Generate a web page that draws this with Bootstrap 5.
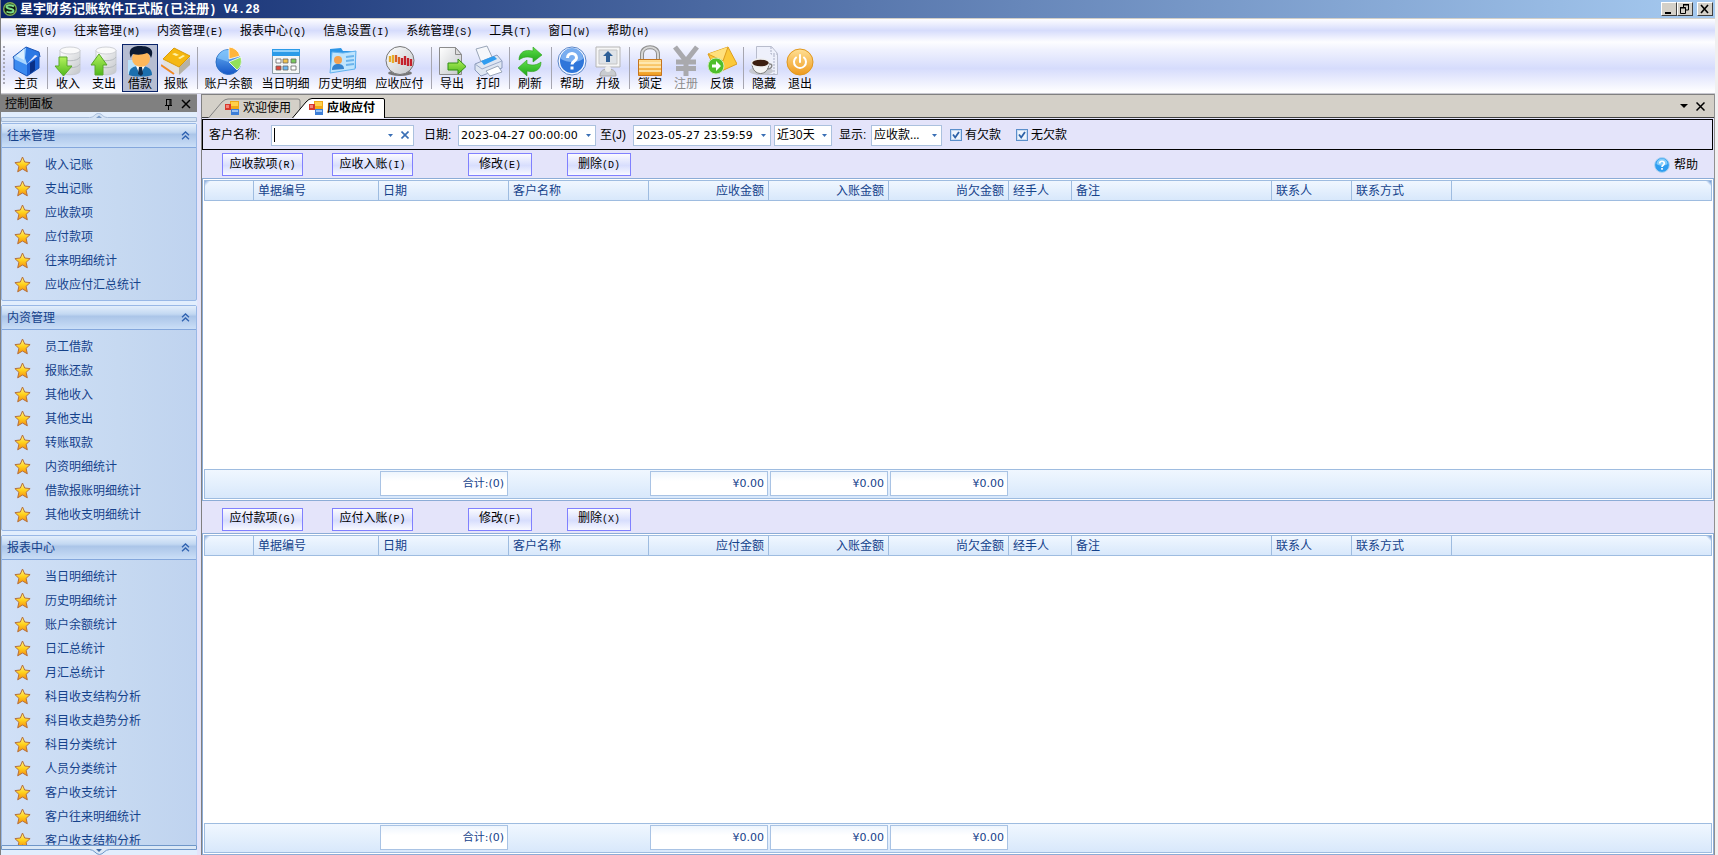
<!DOCTYPE html>
<html lang="zh-CN">
<head>
<meta charset="utf-8">
<meta name="viewport" content="width=device-width, initial-scale=1">
<title>星宇财务记账软件正式版</title>
<link rel="stylesheet" href="https://cdn.jsdelivr.net/npm/bootstrap@5.3.0/dist/css/bootstrap.min.css">
<style>
:root{--navy:#15428b;--line:#9ebce0;--lav:#e4e4fa}
body{font:12px/16px "DejaVu Sans","Noto Sans CJK SC",sans-serif;color:#000;background:#f0f0f0;overflow:hidden}
.cjk,.cjk button,.cjk a{font-family:"Liberation Sans","Noto Sans CJK SC",sans-serif}
.app{height:100vh;margin-right:3px;border-left:1px solid #808080;background:var(--lav)}
.key{font-family:"Liberation Mono",monospace;font-size:10px}
button,input,select{font:inherit;color:inherit}
button{padding:0;border:0;background:none;white-space:nowrap}
a{color:inherit;text-decoration:none;white-space:nowrap}
.defs{width:0;height:0;position:absolute}
/* title bar */
.titlebar{height:19px;flex:none;padding:0 2px;background:linear-gradient(90deg,#0a246a,#a6caf0);border-bottom:1px solid #d4d0c8;color:#fff;font-size:13px;font-weight:700}
.titlebar h1{font:inherit;margin:0 0 0 3px;white-space:pre}
.titlebar h1 span{font:700 12px "Liberation Mono",monospace}
.winbtn{width:16px;height:14px;background:#d4d0c8;border:1px solid;border-color:#fff #404040 #404040 #fff;display:flex}
/* menu and tool strips */
.menus{height:23px;flex:none;padding:2px 0 0 5px;background:linear-gradient(#fdfdff,#d6dcfc 50%,#fdfdff)}
.menus button{padding:0 8px 0 9px}
.tools{height:52px;flex:none;padding:2px 0 1px 2px;background:linear-gradient(#fdfdff,#f0f2fe 15%,#d6dcfc 52%,#fdfdff 96%);border-bottom:1px solid #c8c8d0}
.grip{width:5px;height:40px;margin-top:2px;background:repeating-linear-gradient(#a8a8b4 0 2px,transparent 2px 4px);background-clip:content-box;padding-right:3px}
.tool{width:36px;height:48px;display:flex;flex-direction:column;align-items:center;border:1px solid transparent;flex:none}
.tool.wide{width:57px}
.tool svg{width:30px;height:32px;flex:none}
.tool span{line-height:14px}
.tool.on{background:#b6bdd2;border-color:#0a246a}
.tool:disabled{color:#8d8d8d}
.sep{width:6px;flex:none;display:flex;justify-content:center}
.sep::before{content:"";width:1px;height:42px;margin-top:3px;background:#a6a6b0}
/* left panel */
.side{width:196px;flex:none;margin-right:4px;color:var(--navy)}
.sidehead{height:18px;background:#808080;color:#000;padding:0 5px 0 4px;border-top:1px solid #9a9a9a}
.panelbody{background:#e2eefd;flex:1;min-height:0}
.strip{height:11px;flex:none}
.strip.dn{height:10px}
.strip svg{width:100%;height:100%;display:block}
.groups{flex:1;min-height:0;overflow:hidden}
.grp{border:1px solid #99b8e6;border-radius:2px;margin-bottom:4px;background:linear-gradient(90deg,#d0e0f7,#c6d9f1 60%,#bfd3ef)}
.grp h2{font:inherit;height:24px;margin:0;padding:0 6px 0 5px;border-bottom:1px solid #84a7dc;background:linear-gradient(#e3eefb,#c3d8f2 35%,#abc5e8 45%,#cadef7)}
.grp ul{list-style:none;margin:0;padding:5px 0 3px 12px}
.grp li a{height:24px;display:flex;align-items:center;gap:14px}
.grp li svg{width:17px;height:17px;flex:none;margin-bottom:2px}
/* document area */
.work{flex:1;min-width:0;border-left:1px solid #808080;border-right:1px solid #909090}
.tabs{height:24px;flex:none;background:#d4d0c8;border-top:1px solid #808080;border-bottom:1px solid #404040;padding:0 9px 0 6px}
.doctab{height:20px;width:93px;margin-top:3px;position:relative;display:flex;align-items:center;padding-left:17px;gap:4px}
.doctab + .doctab{margin-left:-9px}
.doctab .edge{position:absolute;inset:0;width:93px;height:20px}
.doctab .ico,.doctab span{position:relative}
.doctab .ico{width:14px;height:14px}
.filter{height:31px;flex:none;border:1px solid #000;margin:1px 1px 0 0;padding:1px 0 0 6px;font-size:12px}
.filter input[type=text]{font-size:11px;font-family:"DejaVu Sans","Noto Sans CJK SC",sans-serif}
.combo{height:21px;border:1px solid #abc1de;background:#fff;display:flex;align-items:center}
.combo input{border:0;outline:0;padding:0 0 0 2px;flex:1;min-width:0;height:18px;background:none}
.combo input:placeholder-shown{background:linear-gradient(#000,#000) 2px center/1px 14px no-repeat}
.combo button{width:14px;height:18px;display:flex;align-items:center;justify-content:center}
.combo button.clr{width:16px}
.pick{height:21px;border:1px solid #abc1de;border-radius:0;padding:0 2px;appearance:none;font-family:"Open Sans","Noto Sans CJK SC",sans-serif;background:#fff url("data:image/svg+xml,%3Csvg xmlns='http://www.w3.org/2000/svg' width='5' height='3'%3E%3Cpath d='M0 0h5L2.5 3z' fill='%233a6fb5'/%3E%3C/svg%3E") no-repeat right 4px center}
.tick{width:12px;height:12px;margin:0 3px 0 0;appearance:none;border:1px solid #5b8fcb;background:#fff;box-shadow:inset 0 0 0 1px #c9dcf2}
.tick:checked{background:#eef4fc url("data:image/svg+xml,%3Csvg xmlns='http://www.w3.org/2000/svg' viewBox='0 0 10 10'%3E%3Cpath d='M2 4.5l2.2 3L8 2' fill='none' stroke='%232c62a8' stroke-width='1.8'/%3E%3C/svg%3E")}
.acts{height:28px;flex:none;padding:0 16px 2px 20px}
.acts.second{height:32px}
.act{height:23px;width:81px;border:1px solid #8080ff;background:linear-gradient(#fbfbff,#d8defd 55%,#f8f9ff)}
.act.short{width:64px}
.ledger{flex:1 1 0;min-height:0;border:1px solid #8cacd6;background:#fff;padding:1px}
.ledger table{table-layout:fixed;width:100%;height:100%;border-collapse:separate;border-spacing:0;color:var(--navy)}
.ledger th{height:21px;font-weight:400;padding:1px 4px 0;border:solid var(--line);border-width:1px 1px 1px 0;background:linear-gradient(#f0f7ff,#d8e8fb);line-height:16px}
.ledger th:first-child{border-left-width:1px;background:linear-gradient(135deg,#86a9dc,transparent 4px),linear-gradient(#f0f7ff,#d8e8fb)}
.ledger th:last-child{background:linear-gradient(225deg,#5f8fd0,transparent 4px),linear-gradient(#f0f7ff,#d8e8fb)}
.ledger tbody td{padding:0}
.ledger tfoot td{height:29px;padding:1px 1px 2px;border:solid var(--line);border-width:1px 0;background:linear-gradient(#f0f7ff,#d8e8fb);font:11px/16px "DejaVu Sans","Noto Sans CJK SC",sans-serif}
.ledger tfoot td:first-child{border-left-width:1px}
.ledger tfoot td:last-child{border-right-width:1px}
.ledger .sum{height:25px;line-height:23px;border:1px solid #a9c3e4;background:linear-gradient(#eef5fd,#fff 40%);padding-right:3px;text-align:right}
</style>
</head>
<body>
<svg class="defs" aria-hidden="true">
<defs>
<linearGradient id="gold" x2="0" y2="1"><stop stop-color="#fff48a"/><stop offset=".5" stop-color="#ffd21c"/><stop offset="1" stop-color="#f58a12"/></linearGradient>
<linearGradient id="blue" x2="0" y2="1"><stop stop-color="#6cb4f4"/><stop offset="1" stop-color="#1557c8"/></linearGradient>
<linearGradient id="green" x2="0" y2="1"><stop stop-color="#b4f25e"/><stop offset="1" stop-color="#4fb81c"/></linearGradient>
<linearGradient id="leaf" x2="0" y2="1"><stop stop-color="#5fe04a"/><stop offset="1" stop-color="#1fa51c"/></linearGradient>
<linearGradient id="grey" x2="1" y2="1"><stop stop-color="#fff"/><stop offset="1" stop-color="#c3c6ca"/></linearGradient>
<linearGradient id="orange" x2="0" y2="1"><stop stop-color="#ffe096"/><stop offset="1" stop-color="#ef9a1c"/></linearGradient>
<symbol id="star" viewBox="0 0 17 17"><path d="M8.5 1l2.200 5 5.400.6-4 3.700 1.200 5.500-4.800-2.800-4.800 2.800 1.200-5.500-4-3.700 5.400-.6z" fill="url(#gold)" stroke="#b5703c"/></symbol>
<symbol id="up2" viewBox="0 0 9 9"><path d="M1 4.2L4.500 1 8 4.200M1 8.200L4.500 5 8 8.200" fill="none" stroke="#2f62b0" stroke-width="1.300"/></symbol>
<symbol id="coins" viewBox="0 0 30 32"><path d="M7 5v21c0 5 20 5 20 0V5" fill="url(#grey)" stroke="#c6cacf"/><ellipse cx="17" cy="5.500" rx="10" ry="3.500" fill="#fafafa" stroke="#d0d2d6"/><path d="M7 12c2 5 18 5 20 0M7 19c2 5 18 5 20 0" fill="none" stroke="#b6babf"/></symbol>
<symbol id="form" viewBox="0 0 14 14"><path d="M5 0h9v8H5z" fill="#f0a818"/><path d="M6 1h7v4H6z" fill="#ffd04a"/><path d="M0 3h6v6H0z" fill="#d8372c"/><path d="M1 4h3v3H1z" fill="#f2857c"/><path d="M6 8h8v6H6z" fill="#3e7fd8"/><path d="M7 9h6v2H7z" fill="#9cc4f5"/></symbol>
<symbol id="tri" viewBox="0 0 5 3"><path d="M0 0h5L2.500 3z" fill="#3a6fb5"/></symbol>
</defs>
</svg>

<div class="app d-flex flex-column cjk">
<header class="titlebar d-flex align-items-center">
  <svg width="14" height="14" viewBox="0 0 14 14"><circle cx="7" cy="7" r="6.300" fill="#0d1a10" stroke="#7fae54" stroke-width="1.400"/><path d="M11 4.500C8 2.500 3.500 3 3.500 5s7 1.500 7 3.700-4.500 2.300-7 .8" fill="none" stroke="#7ee08a" stroke-width="2"/></svg>
  <h1>星宇财务记账软件正式版<span>(</span>已注册<span>) V4.28</span></h1>
  <div class="ms-auto d-flex">
    <button class="winbtn" aria-label="最小化"><svg width="14" height="12"><path d="M3 9h6v2H3z"/></svg></button>
    <button class="winbtn" aria-label="还原"><svg width="14" height="12" fill="none" stroke="#000"><path d="M5 2h6M5.500 1v3M5 1.500h6M10.500 1v6H8M3 5h5M2.500 4v6.500h5V4.500H2.500"/></svg></button>
    <button class="winbtn ms-1" aria-label="关闭"><svg width="14" height="12"><path d="M3 2l7 8M10 2l-7 8" stroke="#000" stroke-width="1.600"/></svg></button>
  </div>
</header>
<nav class="menus d-flex align-items-center">
  <button>管理<span class="key">(G)</span></button><button>往来管理<span class="key">(M)</span></button><button>内资管理<span class="key">(E)</span></button><button>报表中心<span class="key">(Q)</span></button><button>信息设置<span class="key">(I)</span></button><button>系统管理<span class="key">(S)</span></button><button>工具<span class="key">(T)</span></button><button>窗口<span class="key">(W)</span></button><button>帮助<span class="key">(H)</span></button>
</nav>
<div class="tools d-flex" role="toolbar">
  <div class="grip"></div>
  <button class="tool"><svg viewBox="0 0 30 32"><path d="M3 13v11l13 7V19z" fill="#3b8af0"/><path d="M16 19l12-9v13l-12 8z" fill="#1c62d6"/><path d="M15 2L2 12l1 2 13 6 0-6z" fill="#a9d6ff"/><path d="M15 2l13 5 1 5-5-2-8 9-2-6z" fill="#2b78e4"/><path d="M15 2l13 5 1 5M15 2L2 12l1 2v10l13 7 12-8V12" fill="none" stroke="#1a55b8"/><path d="M19 18l5-3v10l-5 4z" fill="#0a2f86"/><path d="M13 4L5 11l8 4z" fill="#dcf0ff"/></svg><span>主页</span></button>
  <div class="sep"></div>
  <button class="tool"><svg viewBox="0 0 30 32"><use href="#coins"/><path d="M6 12h8v9h5l-8.500 10L2 21h4z" fill="url(#green)" stroke="#5aa82a"/></svg><span>收入</span></button>
  <button class="tool"><svg viewBox="0 0 30 32"><use href="#coins"/><path d="M6 30h8V20h4L10 9 2 20h4z" fill="url(#green)" stroke="#5aa82a"/></svg><span>支出</span></button>
  <button class="tool on"><svg viewBox="0 0 30 32"><path d="M3 15h12v14H3z" fill="#b9e2fb"/><path d="M4 30c0-7 4-9 11-9s12 2 12 9c-4 2-19 2-23 0z" fill="#1b6fae"/><path d="M11 21l4 9 5-9z" fill="#fff"/><path d="M14 22h3l1 7-2 2-3-2z" fill="#102a48"/><ellipse cx="16" cy="13.500" rx="9" ry="8.500" fill="#fdb75a"/><path d="M6 13C2 3 9 1 15 1c9 0 15 3 11 12-1-3-2-4-4-5-5 2-10 2-14 1-1 1-2 2-2 4z" fill="#0b1a33"/></svg><span>借款</span></button>
  <button class="tool"><svg viewBox="0 0 30 32"><path d="M2 14l16 8v8L3 20z" fill="#e4e2dc"/><path d="M18 22l11-10v8L18 30z" fill="#b5b1a6"/><path d="M2 14L13 3l16 8-11 11z" fill="#f5b811" stroke="#d99a08"/><path d="M11 9l3-1 4 2-3 1zM17 13l5-3 2 1-5 3z" fill="#fff2a8"/><path d="M0 20l13 9" stroke="#f08a24" stroke-width="2"/></svg><span>报账</span></button>
  <div class="sep"></div>
  <button class="tool wide"><svg viewBox="0 0 30 32"><circle cx="14.500" cy="17" r="12.500" fill="url(#blue)" stroke="#2a6fc4"/><path d="M14.500 17V4.500A12.500 12.500 0 003 13z" fill="#8fd0ff" opacity=".6"/><path d="M15 14V2a12 12 0 0111 9z" fill="#ffb53c" stroke="#fff" stroke-width=".8"/><path d="M15 17l12-5c1 6 0 10-4 13z" fill="#92e05a" stroke="#fff" stroke-width=".8"/></svg><span>账户余额</span></button>
  <button class="tool wide"><svg viewBox="0 0 30 32"><path d="M1.500 4.500h27v24h-27z" fill="#f4f6f6" stroke="#8b9aa4"/><path d="M1 4h28v7H1z" fill="#2c9be8"/><path d="M2 5h26v2H2z" fill="#8fd0fb"/><g stroke="#666" stroke-width=".8"><path d="M5 14h5v4H5z" fill="#fff"/><path d="M12 14h5v4h-5z" fill="#f2c24c"/><path d="M20 14h5v4h-5z" fill="#79c95c"/><path d="M5 21h5v4H5z" fill="#e0483c"/><path d="M12 21h5v4h-5z" fill="#6bb8f2"/><path d="M20 21h5v4h-5z" fill="#fff"/></g></svg><span>当日明细</span></button>
  <button class="tool wide"><svg viewBox="0 0 30 32"><path d="M2 4l11-1 2 3h13v17l-26 4z" fill="#2d95e6"/><path d="M4 7l11 1 13-2-1 18-25 4z" fill="#bfe4fd" stroke="#62b2ef"/><circle cx="10" cy="15" r="4" fill="#f4a14e"/><path d="M4 25c0-5 3-6 6-6s6 1 6 5z" fill="#3583ce"/><path d="M18 12l8-1M18 16l8-1M18 20l8-1" stroke="#6bb3ec" stroke-width="2"/></svg><span>历史明细</span></button>
  <button class="tool wide"><svg viewBox="0 0 30 32"><ellipse cx="15" cy="28" rx="12" ry="3" fill="#777"/><circle cx="15" cy="15.500" r="14" fill="url(#grey)" stroke="#777"/><g stroke-width="2.300"><path d="M5 11v6M8 10v8" stroke="#e6ad28"/><path d="M11 10v7M14 12v7" stroke="#d95f24"/><path d="M17 13v7M20 11v9M23 13v8M26 14v7" stroke="#c4202a"/></g></svg><span>应收应付</span></button>
  <div class="sep"></div>
  <button class="tool"><svg viewBox="0 0 30 32"><path d="M2.500 2.500h16l6 7v20h-22z" fill="url(#grey)" stroke="#8c8c8c"/><path d="M18.500 2.500v7h6z" fill="#ddd" stroke="#8c8c8c"/><path d="M11 18h10v-4l8 7.500-8 7.500v-4H11z" fill="url(#green)" stroke="#2f8f12"/></svg><span>导出</span></button>
  <button class="tool"><svg viewBox="0 0 30 32"><path d="M3 4l11-3 6 13-12 3z" fill="#f5f7fb" stroke="#9aa6b8"/><path d="M2 19l22-9 5 6v7L8 31l-6-6z" fill="#dfe6f2" stroke="#8b9abb"/><path d="M8 16l13-5 3 3-13 6z" fill="#2f9cf0"/><path d="M2 19l7 5 20-8" fill="none" stroke="#9dabc9"/><path d="M13 26l12-5 4 6-12 4z" fill="#fff" stroke="#9aa6b8"/></svg><span>打印</span></button>
  <div class="sep"></div>
  <button class="tool"><svg viewBox="0 0 30 32" fill="url(#leaf)" stroke="#2fa01c" stroke-width=".6"><path d="M4 15C4 7 10 4 18 6V2l9 8-9 7v-4c-6-2-10-1-14 2z"/><path d="M26 17c0 8-6 11-14 9v5l-9-8 9-8v4c6 2 10 1 14-2z"/></svg><span>刷新</span></button>
  <div class="sep"></div>
  <button class="tool"><svg viewBox="0 0 30 32"><circle cx="15" cy="16" r="14" fill="#f3f7ff" stroke="#5b86c8"/><circle cx="15" cy="16" r="12" fill="#2f76da"/><path d="M4 14a11 11 0 0122 0c-5 4-16 4-22 0z" fill="#78adf0"/><path d="M10.500 13c0-6 9-6 9 0 0 3-4.500 3-4.500 6.500M15 21.500v3" fill="none" stroke="#fff" stroke-width="3"/></svg><span>帮助</span></button>
  <button class="tool"><svg viewBox="0 0 30 32"><path d="M3 2h24v20H3z" fill="#f6f6f6" stroke="#b5b5b5"/><path d="M6 5h18v14H6z" fill="#dfe3e8" stroke="#c5c5c5"/><path d="M15 6l5 5h-3v6h-4v-6h-3z" fill="#2e5f97"/><path d="M7 31c0-6 4-7 8-7s8 1 8 7z" fill="#c9ccd0" stroke="#a9a9a9"/><circle cx="15" cy="24" r="3" fill="#eee"/></svg><span>升级</span></button>
  <div class="sep"></div>
  <button class="tool"><svg viewBox="0 0 30 32"><path d="M7 15V9c0-9 16-9 16 0v6" fill="none" stroke="#8d8d8d" stroke-width="4"/><path d="M7 15V9c0-9 16-9 16 0v6" fill="none" stroke="#d6d6d6" stroke-width="2"/><path d="M3.500 14.500h23v16h-23z" fill="url(#orange)" stroke="#c4741e"/><path d="M4 18h22M4 22h22M4 26h22" stroke="#fff0c0" stroke-width="1.300"/></svg><span>锁定</span></button>
  <button class="tool" disabled><svg viewBox="0 0 30 32"><path d="M4 2l11 14L26 2M15 15v16M5 17h20M5 23.500h20" fill="none" stroke="#a9a9ad" stroke-width="5"/></svg><span>注册</span></button>
  <button class="tool"><svg viewBox="0 0 30 32"><path d="M1 9l20-7 9 17-20 9z" fill="#fbc93a" stroke="#dd9e1e"/><path d="M1 9l15 7 5-14" fill="#ffe07c" stroke="#dd9e1e"/><circle cx="9" cy="21" r="8" fill="#4fbf2c" stroke="#cdebb8"/><path d="M5 19.500h4V16l5 5-5 5v-3.500H5z" fill="#fff"/></svg><span>反馈</span></button>
  <div class="sep"></div>
  <button class="tool"><svg viewBox="0 0 30 32"><path d="M7.500 1.500h15l6 7v21h-21z" fill="#eef0fb" stroke="#b8bccc"/><path d="M22 2v7h6M25 10v19" fill="none" stroke="#a9aec4" stroke-dasharray="2 1"/><ellipse cx="12" cy="26" rx="12" ry="4" fill="#c6c8d0"/><path d="M3 18c0 14 17 14 17 0z" fill="#f4f4f4" stroke="#777"/><ellipse cx="11.500" cy="18" rx="9" ry="4" fill="#3d1f10" stroke="#eee" stroke-width="1.500"/><path d="M20 19c4-1 4 5-2 5" fill="none" stroke="#888" stroke-width="1.500"/></svg><span>隐藏</span></button>
  <button class="tool"><svg viewBox="0 0 30 32"><circle cx="15" cy="17" r="13" fill="url(#orange)" stroke="#e0981e"/><path d="M11 12.500a6 6 0 108 0M15 10v7" fill="none" stroke="#fff" stroke-width="2" stroke-linecap="round"/></svg><span>退出</span></button>
</div>

<div class="d-flex flex-fill" style="min-height:0">
<aside class="side d-flex flex-column">
  <div class="sidehead d-flex align-items-center"><span class="me-auto">控制面板</span>
    <button class="me-2 d-flex" aria-label="固定"><svg width="9" height="12" fill="none" stroke="#000"><path d="M2.500 1v6M2 1.500h5M6 1v6M7 1v6M1 7.500h7M4.500 8v4"/></svg></button>
    <button class="d-flex" aria-label="关闭面板"><svg width="11" height="10"><path d="M1 1l8 8M9 1L1 9" stroke="#000" stroke-width="1.500"/></svg></button>
  </div>
  <div class="panelbody d-flex flex-column">
    <div class="strip"><svg viewBox="0 0 196 11"><path d="M.5 5.500h88c5 0 5-4 9-4s4 4 9 4h89v4H.5z" fill="#d5e3f4" stroke="#a4bad8"/><path d="M95 6l3-2.500L101 6z" fill="#7b9cc8"/></svg></div>
    <div class="groups">
      <section class="grp"><h2 class="d-flex align-items-center justify-content-between">往来管理<svg width="9" height="9"><use href="#up2"/></svg></h2>
        <ul>
          <li><a href="#"><svg><use href="#star"/></svg>收入记账</a></li>
          <li><a href="#"><svg><use href="#star"/></svg>支出记账</a></li>
          <li><a href="#"><svg><use href="#star"/></svg>应收款项</a></li>
          <li><a href="#"><svg><use href="#star"/></svg>应付款项</a></li>
          <li><a href="#"><svg><use href="#star"/></svg>往来明细统计</a></li>
          <li><a href="#"><svg><use href="#star"/></svg>应收应付汇总统计</a></li>
        </ul></section>
      <section class="grp"><h2 class="d-flex align-items-center justify-content-between">内资管理<svg width="9" height="9"><use href="#up2"/></svg></h2>
        <ul>
          <li><a href="#"><svg><use href="#star"/></svg>员工借款</a></li>
          <li><a href="#"><svg><use href="#star"/></svg>报账还款</a></li>
          <li><a href="#"><svg><use href="#star"/></svg>其他收入</a></li>
          <li><a href="#"><svg><use href="#star"/></svg>其他支出</a></li>
          <li><a href="#"><svg><use href="#star"/></svg>转账取款</a></li>
          <li><a href="#"><svg><use href="#star"/></svg>内资明细统计</a></li>
          <li><a href="#"><svg><use href="#star"/></svg>借款报账明细统计</a></li>
          <li><a href="#"><svg><use href="#star"/></svg>其他收支明细统计</a></li>
        </ul></section>
      <section class="grp"><h2 class="d-flex align-items-center justify-content-between">报表中心<svg width="9" height="9"><use href="#up2"/></svg></h2>
        <ul>
          <li><a href="#"><svg><use href="#star"/></svg>当日明细统计</a></li>
          <li><a href="#"><svg><use href="#star"/></svg>历史明细统计</a></li>
          <li><a href="#"><svg><use href="#star"/></svg>账户余额统计</a></li>
          <li><a href="#"><svg><use href="#star"/></svg>日汇总统计</a></li>
          <li><a href="#"><svg><use href="#star"/></svg>月汇总统计</a></li>
          <li><a href="#"><svg><use href="#star"/></svg>科目收支结构分析</a></li>
          <li><a href="#"><svg><use href="#star"/></svg>科目收支趋势分析</a></li>
          <li><a href="#"><svg><use href="#star"/></svg>科目分类统计</a></li>
          <li><a href="#"><svg><use href="#star"/></svg>人员分类统计</a></li>
          <li><a href="#"><svg><use href="#star"/></svg>客户收支统计</a></li>
          <li><a href="#"><svg><use href="#star"/></svg>客户往来明细统计</a></li>
          <li><a href="#"><svg><use href="#star"/></svg>客户收支结构分析</a></li>
        </ul></section>
    </div>
    <div class="strip dn"><svg viewBox="0 0 196 10"><path d="M.5.500h195v4h-87c-5 0-6 5-10 5s-5-5-10-5H.5z" fill="#dbe8f6" stroke="#6f96c8"/><path d="M95 4h6l-3 3z" fill="#3f6aa6"/></svg></div>
  </div>
</aside>

<main class="work d-flex flex-column">
  <div class="tabs d-flex align-items-center">
    <button class="doctab"><svg class="edge" viewBox="0 0 93 20"><path d="M.5 20L14 4q3-3 6-3h70q2 0 2 2v17" fill="#d4d0c8" stroke="#808080"/></svg><svg class="ico"><use href="#form"/></svg><span>欢迎使用</span></button>
    <button class="doctab fw-bold"><svg class="edge" viewBox="0 0 93 20"><path d="M.5 20L14 4q3-3.500 6-3.500h71q1.500 0 1.500 1.500v18" fill="#fff" stroke="#000"/></svg><svg class="ico"><use href="#form"/></svg><span>应收应付</span></button>
    <button class="ms-auto me-2 d-flex" aria-label="窗口列表"><svg width="8" height="5"><path d="M0 0h8L4 4z"/></svg></button>
    <button class="d-flex" aria-label="关闭"><svg width="9" height="9"><path d="M.5.500l8 8M8.500.500l-8 8" stroke="#000" stroke-width="1.500"/></svg></button>
  </div>
  <form class="filter d-flex align-items-center">
    <label for="cust" style="width:62px">客户名称:</label>
    <div class="combo" style="width:143px"><input type="text" id="cust" placeholder=" "><button type="button" aria-label="选择客户"><svg width="5" height="3"><use href="#tri"/></svg></button><button type="button" class="clr" aria-label="清除"><svg width="8" height="8"><path d="M.5.500l7 7M7.500.500l-7 7" stroke="#3a6fb5" stroke-width="1.600"/></svg></button></div>
    <label for="from" style="width:34px;margin-left:10px">日期:</label>
    <div class="combo" style="width:138px"><input type="text" id="from" value="2023-04-27 00:00:00"><button type="button" aria-label="选择起始日期"><svg width="5" height="3"><use href="#tri"/></svg></button></div>
    <label for="to" style="width:33px;margin-left:4px">至(J)</label>
    <div class="combo" style="width:138px"><input type="text" id="to" value="2023-05-27 23:59:59"><button type="button" aria-label="选择截止日期"><svg width="5" height="3"><use href="#tri"/></svg></button></div>
    <select class="pick" style="width:58px;margin-left:3px" aria-label="期间"><option>近30天</option></select>
    <label for="show" style="width:32px;margin-left:7px">显示:</label>
    <select class="pick" id="show" style="width:71px"><option>应收款...</option></select>
    <label class="d-flex align-items-center" style="margin-left:8px"><input class="tick" type="checkbox" checked>有欠款</label>
    <label class="d-flex align-items-center" style="margin-left:15px"><input class="tick" type="checkbox" checked>无欠款</label>
  </form>
  <div class="acts d-flex align-items-end">
    <button class="act">应收款项<span class="key">(R)</span></button>
    <button class="act" style="margin-left:29px">应收入账<span class="key">(I)</span></button>
    <button class="act short" style="margin-left:55px">修改<span class="key">(E)</span></button>
    <button class="act short" style="margin-left:35px">删除<span class="key">(D)</span></button>
    <a href="#" class="ms-auto d-flex align-items-center" style="height:23px"><svg width="16" height="16" class="me-1" viewBox="0 0 16 16"><circle cx="8" cy="8" r="7.400" fill="#2e9df0" stroke="#b4d4f0"/><path d="M2.500 7a5.500 5.500 0 0111 0c-3 2-8 2-11 0z" fill="#82ccfa"/><path d="M5.700 6.500c0-3 4.600-3 4.600 0C10.300 8 8 8 8 10M8 11v1.800" fill="none" stroke="#fff" stroke-width="1.700"/></svg>帮助</a>
  </div>
  <div class="ledger">
    <table>
      <colgroup><col width="50"><col width="125"><col width="130"><col width="140"><col width="120"><col width="120"><col width="120"><col width="63"><col width="200"><col width="80"><col width="100"><col></colgroup>
      <thead><tr><th></th><th>单据编号</th><th>日期</th><th>客户名称</th><th class="text-end">应收金额</th><th class="text-end">入账金额</th><th class="text-end">尚欠金额</th><th>经手人</th><th>备注</th><th>联系人</th><th>联系方式</th><th></th></tr></thead>
      <tbody><tr><td colspan="12"></td></tr></tbody>
      <tfoot><tr><td></td><td></td><td><div class="sum">合计:(0)</div></td><td></td><td><div class="sum">¥0.00</div></td><td><div class="sum">¥0.00</div></td><td><div class="sum">¥0.00</div></td><td></td><td></td><td></td><td></td><td></td></tr></tfoot>
    </table>
  </div>
  <div class="acts second d-flex align-items-end">
    <button class="act">应付款项<span class="key">(G)</span></button>
    <button class="act" style="margin-left:29px">应付入账<span class="key">(P)</span></button>
    <button class="act short" style="margin-left:55px">修改<span class="key">(F)</span></button>
    <button class="act short" style="margin-left:35px">删除<span class="key">(X)</span></button>
  </div>
  <div class="ledger">
    <table>
      <colgroup><col width="50"><col width="125"><col width="130"><col width="140"><col width="120"><col width="120"><col width="120"><col width="63"><col width="200"><col width="80"><col width="100"><col></colgroup>
      <thead><tr><th></th><th>单据编号</th><th>日期</th><th>客户名称</th><th class="text-end">应付金额</th><th class="text-end">入账金额</th><th class="text-end">尚欠金额</th><th>经手人</th><th>备注</th><th>联系人</th><th>联系方式</th><th></th></tr></thead>
      <tbody><tr><td colspan="12"></td></tr></tbody>
      <tfoot><tr><td></td><td></td><td><div class="sum">合计:(0)</div></td><td></td><td><div class="sum">¥0.00</div></td><td><div class="sum">¥0.00</div></td><td><div class="sum">¥0.00</div></td><td></td><td></td><td></td><td></td><td></td></tr></tfoot>
    </table>
  </div>
</main>
</div>
</div>
<script src="https://cdn.jsdelivr.net/npm/bootstrap@5.3.0/dist/js/bootstrap.bundle.min.js"></script>
</body>
</html>
